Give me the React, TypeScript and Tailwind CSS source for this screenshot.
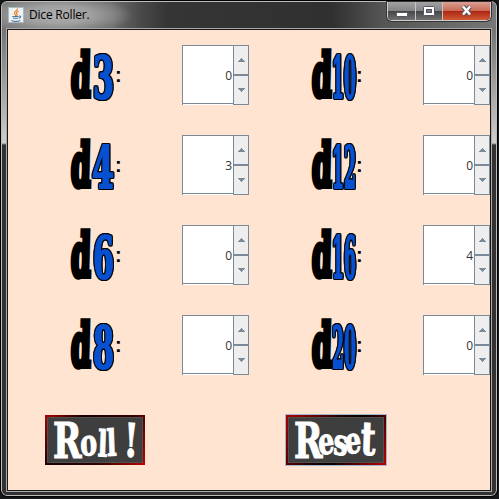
import React from "react";

type DieProps = { sides: string; value: string; width: number; left: number };

/* Lettered die label: black "d", blue outlined number, then a colon. */
function DieLabel({ sides, width, left }: Omit<DieProps, "value">) {
  return (
    <svg width="174" height="90" className="block shrink-0" role="img">
      <g fontFamily="'DejaVu Serif', serif" fontWeight="700">
        <text
          transform="translate(62.5 66) scale(0.5 1) skewX(-3)"
          fontSize="59"
          textLength="40"
          lengthAdjust="spacingAndGlyphs"
          fill="#000"
          stroke="#000"
          strokeWidth="6"
          strokeLinejoin="miter"
        >
          d
        </text>
        <text
          transform={`translate(${left} 68) scale(0.5 1)`}
          fontSize="58"
          textLength={width * 2}
          lengthAdjust="spacingAndGlyphs"
          fill="#0751d1"
          stroke="#0751d1"
          strokeWidth="2"
          className="[filter:drop-shadow(1px_0_0_#000)_drop-shadow(-1px_0_0_#000)_drop-shadow(0_1px_0_#000)_drop-shadow(0_-1px_0_#000)]"
        >
          {sides}
        </text>
      </g>
      <text x="107" y="51.5" fontSize="20" fontWeight="700" fontFamily="'Liberation Sans', sans-serif" fill="#000">
        :
      </text>
    </svg>
  );
}

function Spinner({ value }: { value: string }) {
  return (
    <div className="mt-[15px] flex h-[60px] w-[67px] shrink-0">
      <div className="flex h-[60px] w-[51px] flex-col border-l border-t border-[#7a8a99] bg-white">
        <div className="flex h-[58px] items-center justify-end border-b border-[#7a8a99] pr-px pt-[3px] font-['Open_Sans','Noto_Sans',sans-serif] text-[12px] text-[#333333]">
          {value}
        </div>
      </div>
      <div className="flex h-[60px] w-4 flex-col border border-[#7a8a99] bg-[#eeeeee]">
        <div className="flex h-[29px] items-center justify-center border-b border-[#7a8a99]">
          <svg width="8" height="4" shapeRendering="crispEdges"><path d="M4 0 8 4H0Z" fill="#7a8a99" /></svg>
        </div>
        <div className="flex h-[29px] items-center justify-center border-t border-[#7a8a99]">
          <svg width="8" height="4" shapeRendering="crispEdges"><path d="M0 0H8L4 4Z" fill="#7a8a99" /></svg>
        </div>
      </div>
    </div>
  );
}

function Die({ sides, value, width, left }: DieProps) {
  return (
    <div className="flex h-[90px] w-[241px]">
      <DieLabel sides={sides} width={width} left={left} />
      <Spinner value={value} />
    </div>
  );
}

const dice: DieProps[] = [
  { sides: "3", value: "0", width: 21, left: 85 },
  { sides: "10", value: "0", width: 24, left: 83 },
  { sides: "4", value: "3", width: 22, left: 84 },
  { sides: "12", value: "0", width: 24, left: 83 },
  { sides: "6", value: "0", width: 21, left: 85 },
  { sides: "16", value: "4", width: 24, left: 83 },
  { sides: "8", value: "0", width: 21, left: 85 },
  { sides: "20", value: "0", width: 24, left: 83 },
];

type ActionButtonProps = {
  initial: string;
  rest: string;
  last: string;
  rotate: string;
  dy: string;
  dx: string;
  lastDx: number;
  focused?: boolean;
};

function ActionButton({ initial, rest, last, rotate, dy, dx, lastDx, focused }: ActionButtonProps) {
  return (
    <button className={focused ? "h-[52px] w-[102px] border border-[#a3b8cc]" : "h-[50px] w-[100px]"}>
      <span
        className={
          focused
            ? "flex h-[50px] w-[100px] bg-[linear-gradient(125deg,#b00000,#180000_45%,#080000_60%,#c00000)] p-0.5"
            : "flex h-[50px] w-[100px] bg-[linear-gradient(125deg,#b00000,#180000_28%,#300000_65%,#c00000)] p-0.5"
        }
      >
        <svg width="96" height="46" className="block overflow-visible border border-[#505050] bg-[#3e3e3e]">
          <text
            transform="translate(5 40) scale(0.7 1)"
            fontFamily="'DejaVu Serif', serif"
            fontWeight="700"
            fill="#fff"
            stroke="#fff"
            strokeWidth="1.2"
          >
            <tspan fontSize="49">{initial}</tspan>
            <tspan fontSize="36" rotate={rotate} dy={dy} dx={dx}>{rest}</tspan>
            <tspan fontSize="46" rotate="3" dx={lastDx}>{last}</tspan>
          </text>
        </svg>
      </span>
    </button>
  );
}

function JavaIcon() {
  return (
    <svg width="16" height="16" viewBox="0 0 16 16" className="shrink-0">
      <rect x=".5" y=".5" width="15" height="15" fill="#edf2f5" stroke="#a9b9c3" />
      <path d="M9.5 1.5C10 3.7 6 4.4 6.5 6.6 6.7 7.4 8 8 7.6 9M10.8 4.3C8.5 5 8 6 8.9 7.1 9.4 7.8 9 8.5 8.5 9" fill="none" stroke="#ed7c22" strokeWidth="1.2" />
      <path d="M4.3 9.5H10.7M5 11.3H10.2M3.5 13.5C6 14.6 10 14.4 12.3 13.4M11 9.2C13.4 8.5 13.2 10.8 11 11.2" fill="none" stroke="#4e7896" strokeWidth="1.1" />
    </svg>
  );
}

function WindowControls() {
  return (
    <div className="flex h-[19px] w-[104px] overflow-hidden rounded-b-[5px] border border-t-0 border-[#d0d0d0] bg-[#222] shadow-[0_0_0_1px_#333]">
      <div className="flex w-7 items-center justify-center border-r border-[#c6c6c6] bg-[linear-gradient(#a3a3a3,#858585_48%,#454545_50%,#707070)] pt-1.5">
        <svg width="12" height="5"><rect x=".5" y=".5" width="11" height="4" rx="1" fill="#fff" stroke="#535666" /></svg>
      </div>
      <div className="flex w-[27px] items-center justify-center border-r border-[#c6c6c6] bg-[linear-gradient(#a3a3a3,#858585_48%,#454545_50%,#707070)]">
        <svg width="12" height="10"><rect x=".5" y=".5" width="11" height="9" rx="1" fill="#fff" stroke="#535666" /><rect x="3.5" y="3.5" width="5" height="3" fill="#777" stroke="#535666" /></svg>
      </div>
      <div className="flex flex-1 items-center justify-center bg-[linear-gradient(#dba092,#ca6b58_48%,#ad2412_50%,#ce5a36)] pb-0.5">
        <svg width="13" height="11" viewBox="0 0 13 11">
          <path d="M3 1.5 10 9.5M10 1.5 3 9.5" stroke="#555365" strokeWidth="4.5" />
          <path d="M3 1.5 10 9.5M10 1.5 3 9.5" stroke="#fff" strokeWidth="2.5" />
        </svg>
      </div>
    </div>
  );
}

export default function App() {
  return (
    <div className="h-[499px] w-[499px] overflow-hidden bg-[#151719]">
      <div className="flex h-[497px] w-[498px] flex-col overflow-hidden rounded-[7px] border border-black bg-[linear-gradient(#747474_0px,#747474_28px,#d0cdcb_142px,#333131_144px,#333131_100%)]">
        <div className="flex flex-1 flex-col rounded-[6px] border border-[#bcbcbc]">
          <header className="flex h-[26px] shrink-0 justify-between rounded-t-[5px] bg-[radial-gradient(ellipse_75px_20px_at_56px_13px,#b0b0b0_0%,#a0a0a0_45%,transparent_100%),linear-gradient(90deg,#777_0,#6c6c6c_110px,#484848_140px,#353535_165px,#303030_330px,#555_380px,#777_100%)] pl-1.5 pr-[5px]">
            <div className="flex items-center gap-[5px]">
              <JavaIcon />
              <span className="whitespace-nowrap font-['Open_Sans','Noto_Sans',sans-serif] text-[12px] leading-4 tracking-[-0.2px] text-black">Dice Roller.</span>
            </div>
            <WindowControls />
          </header>
          <main className="mx-1 flex h-[464px] w-[486px] shrink-0 flex-col border border-[#aaa]">
            <div className="flex h-[462px] w-[484px] flex-col overflow-hidden border border-[#171717] bg-[#ffe4d2]">
              <section className="grid shrink-0 grid-cols-[241px_241px]">
                {dice.map((die) => <Die key={die.sides} {...die} />)}
              </section>
              <section className="flex shrink-0 items-center pl-[37px] pt-6">
                <ActionButton initial="R" rest="oll " last="!" rotate="-4 3 -3 0" dy="-2 0 0 0" dx="-1 0 0 0" lastDx={-3} />
                <div className="w-[140px]" />
                <ActionButton initial="R" rest="ese" last="t" rotate="-6 5 -5" dy="-3 -1 0" dx="-5 -3 -2" lastDx={-2} focused />
              </section>
            </div>
          </main>
        </div>
      </div>
    </div>
  );
}
